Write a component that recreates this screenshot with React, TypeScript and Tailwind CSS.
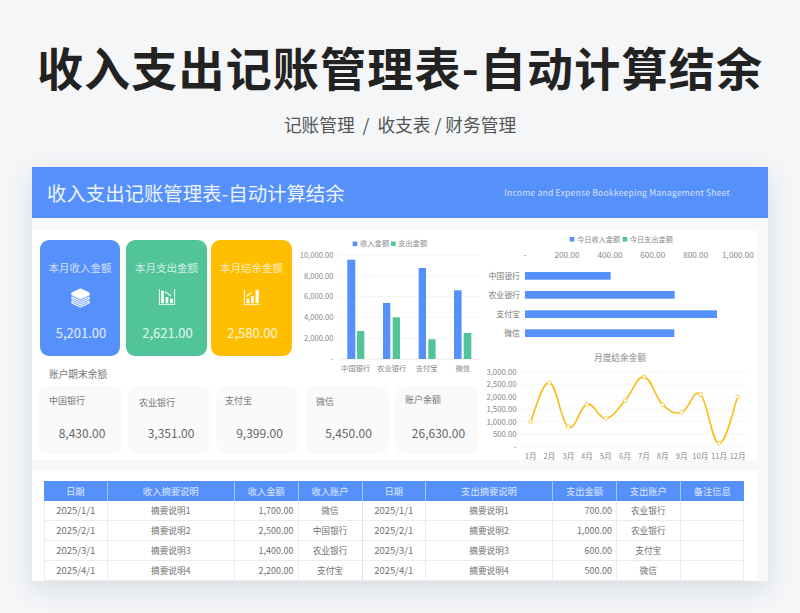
const font = { fontFamily: '"Noto Sans CJK SC", "Noto Sans", sans-serif' };

const BLUE = '#5590fb';
const GREEN = '#52c49a';
const AMBER = '#ffbe00';
const LINE = '#f6c120';

function BooksIcon() {
  return (
    <svg viewBox="0 0 24 24" className="w-[21px] h-[21px]" fill="none" stroke="white" strokeLinejoin="round">
      <path d="M12 2 22 6.6v2.6L12 13.8 2 9.2V6.6Z" fill="white" strokeWidth="0.8" />
      <path d="M2.2 11.4 12 16l9.8-4.6M21.8 11.4v2.2L12 18.2l-9.8-4.6v-2.2" strokeWidth="1.3" />
      <path d="M2.2 16 12 20.6l9.8-4.6v2.2L12 22.8l-9.8-4.6Z" strokeWidth="1.3" />
    </svg>
  );
}

function ChartIcon({ up }: { up?: boolean }) {
  return (
    <svg viewBox="0 0 20 20" className="w-[18px] h-[18px]" fill="white">
      <path d="M1 1h1v17h17v1H1Z" />
      <path d="M18 1h1v18h-1Z" opacity={up ? 0 : 1} />
      {up ? (
        <>
          <rect x="4" y="12" width="3" height="5" />
          <rect x="9" y="9" width="3" height="8" />
          <rect x="14" y="2" width="3.5" height="15" />
          <path d="M3.5 9 9 4.5l1 .9L4.2 10Z" />
        </>
      ) : (
        <>
          <rect x="3.5" y="3" width="3" height="14" />
          <rect x="8.5" y="10" width="3" height="7" />
          <rect x="13.5" y="12" width="3" height="5" />
          <path d="M8 3.5l7 5-.7 1-7-5Z" />
        </>
      )}
    </svg>
  );
}

function StatCard({ label, value, color, width, icon }: { label: string; value: string; color: string; width: string; icon: React.ReactNode }) {
  return (
    <div className={`${width} h-[116px] rounded-[9px] flex flex-col items-center text-white`} style={{ backgroundColor: color }}>
      <div className="mt-[20px] h-[16px] leading-[16px] text-[10.5px] text-white/75">{label}</div>
      <div className="mt-[10px] h-[22px] flex items-center justify-center">{icon}</div>
      <div className="mt-[16px] pl-[2px] leading-[18px] text-[13px] text-white/85">{value}</div>
    </div>
  );
}

const accounts = [
  { label: '中国银行', value: '8,430.00', w: 'w-[85px]', pt: 'pt-[8px]', ml: 'ml-[11px]' },
  { label: '农业银行', value: '3,351.00', w: 'w-[85px]', pt: 'pt-[10px]', ml: 'ml-[12px]' },
  { label: '支付宝', value: '9,399.00', w: 'w-[84px]', pt: 'pt-[8px]', ml: 'ml-[9px]' },
  { label: '微信', value: '5,450.00', w: 'w-[84px]', pt: 'pt-[9px]', ml: 'ml-[11px]' },
  { label: '账户余额', value: '26,630.00', w: 'w-[84px]', pt: 'pt-[7px]', ml: 'ml-[10px]' },
];

function AccountCard({ a }: { a: (typeof accounts)[number] }) {
  return (
    <div className={`${a.w} h-[68px] rounded-[10px] bg-[#fafafa] ${a.pt} flex flex-col`}>
      <div className={`${a.ml} leading-[14px] text-[9px] text-[#777]`}>{a.label}</div>
      <div className="mt-auto mb-[13px] pl-[3px] text-center leading-[16px] text-[12px] text-[#666]">{a.value}</div>
    </div>
  );
}

const barData = [
  { name: '中国银行', c: 355.7, bx: 347.3, bw: 8, by: 259.7, gx: 357, gw: 7.3, gy: 331 },
  { name: '农业银行', c: 391.7, bx: 383, bw: 7.3, by: 303, gx: 392.7, gw: 7.3, gy: 317.3 },
  { name: '支付宝', c: 426.7, bx: 418.7, bw: 7.3, by: 268, gx: 428.3, gw: 7.3, gy: 339.3 },
  { name: '微信', c: 462.7, bx: 454, bw: 7.6, by: 290.3, gx: 463.7, gw: 7.6, gy: 333 },
];

function BarChart() {
  const ticks = ['10,000.00', '8,000.00', '6,000.00', '4,000.00', '2,000.00', '-'];
  return (
    <svg viewBox="295 232 185 146" className="w-[185px] h-[146px] mt-[2px] ml-[3px] shrink-0" style={font}>
      <rect x="352.7" y="241.5" width="4.6" height="4.6" fill={BLUE} />
      <text x="360" y="246.2" fontSize="7.3" fill="#888">收入金额</text>
      <rect x="391" y="241.5" width="4.6" height="4.6" fill={GREEN} />
      <text x="398" y="246.2" fontSize="7.3" fill="#888">支出金额</text>
      {ticks.map((t, i) => {
        const y = 255 + i * 20.8;
        return (
          <g key={t}>
            <line x1="338" x2="480" y1={y} y2={y} stroke={i === 5 ? '#e6e6e6' : '#f3f3f3'} strokeWidth="0.8" />
            <text x="333.5" y={y + 2.8} fontSize="7.6" textAnchor="end" fill="#888">{t}</text>
          </g>
        );
      })}
      {barData.map((b) => (
        <g key={b.name}>
          <rect x={b.bx} y={b.by} width={b.bw} height={359 - b.by} fill={BLUE} />
          <rect x={b.gx} y={b.gy} width={b.gw} height={359 - b.gy} fill={GREEN} />
          <text x={b.c} y={370.5} fontSize="7.3" textAnchor="middle" fill="#888">{b.name}</text>
        </g>
      ))}
    </svg>
  );
}

function HBarChart() {
  const ticks = [['-', 525], ['200.00', 567], ['400.00', 610], ['600.00', 652.7], ['800.00', 695.7], ['1,000.00', 738]] as const;
  const rows = [
    { n: '中国银行', y: 272, x: 610.7, ty: 278.6 },
    { n: '农业银行', y: 291, x: 674.7, ty: 297.6 },
    { n: '支付宝', y: 310.3, x: 717, ty: 316.9 },
    { n: '微信', y: 329.3, x: 674.3, ty: 335.9 },
  ];
  return (
    <svg viewBox="480 230 277 115" className="w-[277px] h-[115px] block" style={font}>
      <rect x="569.7" y="237" width="4.6" height="4.6" fill={BLUE} />
      <text x="577" y="241.7" fontSize="7.2" fill="#888">今日收入金额</text>
      <rect x="622.7" y="237" width="4.6" height="4.6" fill={GREEN} />
      <text x="629.7" y="241.7" fontSize="7.2" fill="#888">今日支出金额</text>
      {ticks.map(([t, x]) => (
        <text key={t} x={x} y={258} fontSize="8.2" textAnchor="middle" fill="#888">{t}</text>
      ))}
      {rows.map((r) => (
        <g key={r.n}>
          <rect x="525" y={r.y} width={r.x - 525} height="7.7" fill={BLUE} />
          <text x="520" y={r.ty} fontSize="7.9" textAnchor="end" fill="#777">{r.n}</text>
        </g>
      ))}
    </svg>
  );
}

const months = ['1月', '2月', '3月', '4月', '5月', '6月', '7月', '8月', '9月', '10月', '11月', '12月'];
const linePts = [
  [152, 230], [208, 113], [265, 246], [321, 178], [378, 220], [435, 167],
  [492, 96], [548, 179], [605, 202], [661, 148], [717, 295], [773, 156],
].map(([x, y]) => [480 + x / 3, 345 + y / 3]);

function smooth(p: number[][]) {
  let d = `M${p[0][0]} ${p[0][1]}`;
  for (let i = 0; i < p.length - 1; i++) {
    const a = p[Math.max(0, i - 1)];
    const b = p[i];
    const c = p[i + 1];
    const e = p[Math.min(p.length - 1, i + 2)];
    const k = 0.2;
    d += ` C${b[0] + (c[0] - a[0]) * k} ${b[1] + (c[1] - a[1]) * k} ${c[0] - (e[0] - b[0]) * k} ${c[1] - (e[1] - b[1]) * k} ${c[0]} ${c[1]}`;
  }
  return d;
}

function LineChart() {
  const ticks = ['3,000.00', '2,500.00', '2,000.00', '1,500.00', '1,000.00', '500.00', '-'];
  return (
    <svg viewBox="480 345 277 115" className="w-[277px] h-[115px] block" style={font}>
      <text x="620" y="361" fontSize="8.7" textAnchor="middle" fill="#888">月度结余金额</text>
      {ticks.map((t, i) => {
        const y = 371.7 + i * 12.5;
        return (
          <g key={t}>
            <line x1="520" x2="748" y1={y} y2={y} stroke="#f5f5f5" strokeWidth="0.8" />
            <text x="516.7" y={y + 2.8} fontSize="7.8" textAnchor="end" fill="#888">{t}</text>
          </g>
        );
      })}
      <path d={smooth(linePts)} fill="none" stroke={LINE} strokeWidth="1.7" />
      {linePts.map(([x, y], i) => (
        <g key={i}>
          <circle cx={x} cy={y} r="1.9" fill="white" stroke={LINE} strokeWidth="0.7" />
          <text x={x} y={458.6} fontSize="7.6" textAnchor="middle" fill="#888">{months[i]}</text>
        </g>
      ))}
    </svg>
  );
}

const headers = ['日期', '收入摘要说明', '收入金额', '收入账户', '日期', '支出摘要说明', '支出金额', '支出账户', '备注信息'];
const rows = [
  ['2025/1/1', '摘要说明1', '1,700.00', '微信', '2025/1/1', '摘要说明1', '700.00', '农业银行', ''],
  ['2025/2/1', '摘要说明2', '2,500.00', '中国银行', '2025/2/1', '摘要说明2', '1,000.00', '农业银行', ''],
  ['2025/3/1', '摘要说明3', '1,400.00', '农业银行', '2025/3/1', '摘要说明3', '600.00', '支付宝', ''],
  ['2025/4/1', '摘要说明4', '2,200.00', '支付宝', '2025/4/1', '摘要说明4', '500.00', '微信', ''],
];
const gridCols = 'grid grid-cols-[63.5px_127.5px_63.5px_64px_63.5px_127px_64px_63.5px_63.5px]';

function Table() {
  return (
    <div className="w-[700px]">
      <div className={`${gridCols} h-[20px] bg-[#5590fb]`}>
        {headers.map((h, i) => (
          <div key={i} className="border-r border-[#a9c7fd] last:border-r-0 text-center leading-[20px] text-[9.3px] text-white/80">{h}</div>
        ))}
      </div>
      {rows.map((r, ri) => (
        <div key={ri} className={`${gridCols} h-[20px] border-b border-[#e9ecf1]`}>
          {r.map((c, i) => (
            <div
              key={i}
              className={`border-r first:border-l leading-[19px] text-[#707070] ${i === 3 ? 'border-[#d7e3fb]' : 'border-[#e9ecf1]'} ${i === 2 || i === 6 ? 'text-right pr-[4px]' : 'text-center'} ${i === 0 || i === 4 ? 'text-[9.5px]' : i === 2 || i === 6 ? 'text-[9px]' : 'text-[8.7px]'}`}
            >
              {c}
            </div>
          ))}
        </div>
      ))}
    </div>
  );
}

export default function App() {
  return (
    <div className="w-[800px] h-[613px] overflow-hidden bg-[#f4f6f8] flex flex-col items-center" style={font}>
      <h1 className="mt-[36px] h-[60px] leading-[60px] text-[46px] font-bold tracking-[1.2px] text-[#222] whitespace-nowrap">
        收入支出记账管理表-自动计算结余
      </h1>
      <div className="mt-[14px] h-[28px] leading-[28px] text-[17.7px] text-[#555] whitespace-pre">{'记账管理  /  收支表 / 财务管理'}</div>
      <div className="mt-[29px] w-[736px] h-[414px] bg-white shadow-[0_8px_24px_rgba(60,70,90,0.14)] flex flex-col">
        <div className="h-[51px] shrink-0 bg-[#5590fb] flex items-center justify-between pl-[15px] pr-[38px] text-white">
          <div className="text-[19.4px] text-white/90 font-normal whitespace-nowrap">收入支出记账管理表-自动计算结余</div>
          <div className="text-[8.6px] tracking-[0.2px] text-white/75 whitespace-nowrap">Income and Expense Bookkeeping Management Sheet</div>
        </div>
        <div className="h-[12px] shrink-0 bg-[#f9f9f9]" />
        <div className="flex h-[230px] shrink-0">
          <div className="w-[448px] pl-[6px]">
            <div className="flex h-[156px]">
              <div className="w-[254px]">
                <div className="flex pl-[2px] pt-[10px]">
                  <StatCard width="w-[80px]" label="本月收入金额" value="5,201.00" color={BLUE} icon={<BooksIcon />} />
                  <div className="w-[6px]" />
                  <StatCard width="w-[81px]" label="本月支出金额" value="2,621.00" color={GREEN} icon={<ChartIcon />} />
                  <div className="w-[4px]" />
                  <StatCard width="w-[81px]" label="本月结余金额" value="2,580.00" color={AMBER} icon={<ChartIcon up />} />
                </div>
                <div className="mt-[9px] pl-[11px] leading-[18px] text-[9.7px] text-[#777]">账户期末余额</div>
              </div>
              <BarChart />
            </div>
            <div className="flex">
              <AccountCard a={accounts[0]} />
              <div className="w-[4px]" />
              <AccountCard a={accounts[1]} />
              <div className="w-[4px]" />
              <AccountCard a={accounts[2]} />
              <div className="w-[5px]" />
              <AccountCard a={accounts[3]} />
              <div className="w-[6px]" />
              <AccountCard a={accounts[4]} />
            </div>
          </div>
          <div className="w-[277px]">
            <HBarChart />
            <LineChart />
          </div>
          <div className="flex-1 bg-[#f9f9f9]" />
        </div>
        <div className="h-[10px] shrink-0 bg-[#f8f8f8]" />
        <div className="flex flex-1 min-h-0">
          <div className="w-[725px] pl-[12px] pt-[11px]">
            <Table />
          </div>
          <div className="flex-1 bg-[#f9f9f9]" />
        </div>
      </div>
    </div>
  );
}
